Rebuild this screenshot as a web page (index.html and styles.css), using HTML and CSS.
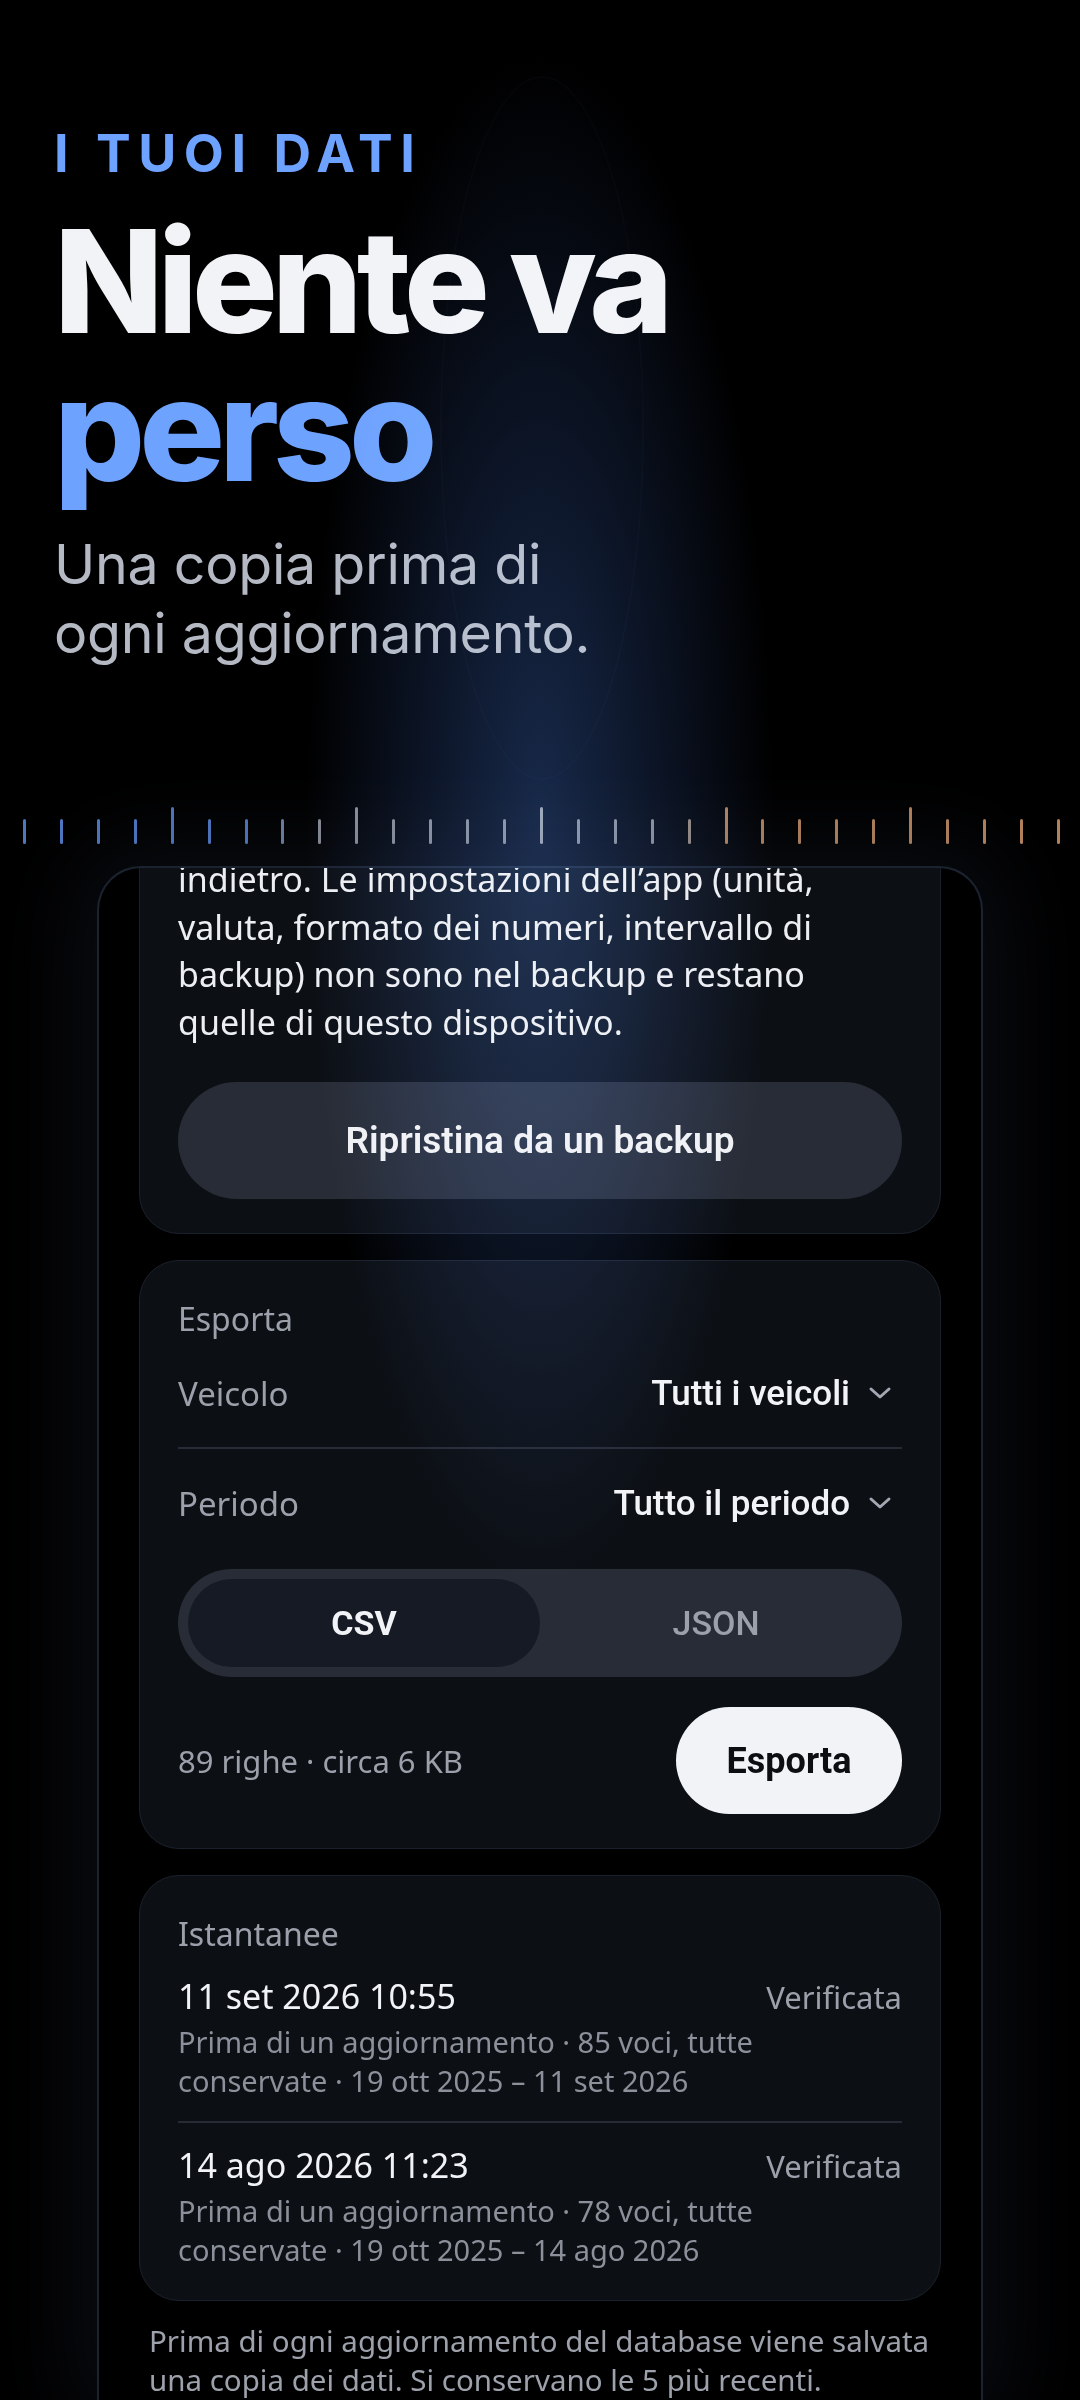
FILE: index.html
```html
<!DOCTYPE html>
<html lang="it">
<head>
    <meta charset="UTF-8">
    <meta name="viewport" content="width=device-width, initial-scale=1.0">
    <title>I tuoi dati</title>
    <link rel="stylesheet" href="styles.css">
</head>
<body>

    <header class="hero">
        <p class="eyebrow">I TUOI DATI</p>
        <h1 class="title">Niente va<br><span class="accent">perso</span></h1>
        <p class="subtitle">Una copia prima di<br>ogni aggiornamento.</p>
    </header>

    <div class="ruler">
        <span class="tick blue"></span>
        <span class="tick blue"></span>
        <span class="tick blue"></span>
        <span class="tick blue"></span>
        <span class="tick blue tall"></span>
        <span class="tick blue"></span>
        <span class="tick blue"></span>
        <span class="tick blue-gray"></span>
        <span class="tick gray"></span>
        <span class="tick gray tall"></span>
        <span class="tick gray"></span>
        <span class="tick gray"></span>
        <span class="tick gray"></span>
        <span class="tick gray"></span>
        <span class="tick light tall"></span>
        <span class="tick gray"></span>
        <span class="tick gray"></span>
        <span class="tick gray"></span>
        <span class="tick gray-orange"></span>
        <span class="tick orange tall"></span>
        <span class="tick orange"></span>
        <span class="tick orange"></span>
        <span class="tick orange"></span>
        <span class="tick orange"></span>
        <span class="tick orange tall"></span>
        <span class="tick orange"></span>
        <span class="tick orange"></span>
        <span class="tick orange"></span>
        <span class="tick orange"></span>
    </div>

    <main class="frame">
        <!-- list is scrolled: the restore card starts above the frame edge -->
        <div class="list">
            <section class="card restore">
                <p class="restore-text">indietro. Le impostazioni dell’app (unità, valuta, formato dei numeri, intervallo di backup) non sono nel backup e restano quelle di questo dispositivo.</p>
                <button class="btn-dark">Ripristina da un backup</button>
            </section>

            <section class="card">
                <p class="card-label">Esporta</p>
                <div class="field">
                    <span class="field-name">Veicolo</span>
                    <span class="field-value">Tutti i veicoli
                        <svg class="chevron" width="24" height="14" viewBox="0 0 24 14"><path d="M3 3 L12 11 L21 3" fill="none" stroke="#a3a8b2" stroke-width="3" stroke-linecap="round" stroke-linejoin="round"/></svg>
                    </span>
                </div>
                <div class="field">
                    <span class="field-name">Periodo</span>
                    <span class="field-value">Tutto il periodo
                        <svg class="chevron" width="24" height="14" viewBox="0 0 24 14"><path d="M3 3 L12 11 L21 3" fill="none" stroke="#a3a8b2" stroke-width="3" stroke-linecap="round" stroke-linejoin="round"/></svg>
                    </span>
                </div>
                <div class="segmented">
                    <span class="seg active">CSV</span>
                    <span class="seg">JSON</span>
                </div>
                <div class="export-row">
                    <span class="export-info">89 righe · circa 6 KB</span>
                    <button class="btn-light">Esporta</button>
                </div>
            </section>

            <section class="card snapshots">
                <p class="card-label">Istantanee</p>
                <div class="snap">
                    <div class="snap-head">
                        <span class="snap-date">11 set 2026 10:55</span>
                        <span class="snap-status">Verificata</span>
                    </div>
                    <p class="snap-meta">Prima di un aggiornamento · 85 voci, tutte conservate · 19 ott 2025 – 11 set 2026</p>
                </div>
                <div class="snap">
                    <div class="snap-head">
                        <span class="snap-date">14 ago 2026 11:23</span>
                        <span class="snap-status">Verificata</span>
                    </div>
                    <p class="snap-meta">Prima di un aggiornamento · 78 voci, tutte conservate · 19 ott 2025 – 14 ago 2026</p>
                </div>
            </section>

            <p class="note">Prima di ogni aggiornamento del database viene salvata una copia dei dati. Si conservano le 5 più recenti.</p>
        </div>
    </main>

    <div class="glow"></div>

</body>
</html>
```

FILE: styles.css
```css
html, body {
    margin: 0;
    background: #000;
}
body {
    position: relative;
    height: 2400px;
    overflow: hidden;
    display: flex;
    flex-direction: column;
    font-family: "Noto Sans", sans-serif;
    color: #eceef2;
}
p {
    margin: 0;
}
button {
    border: none;
    cursor: pointer;
}

/* hero */
.hero {
    padding: 124px 54px 0;
    font-family: Inter, sans-serif;
}
.eyebrow {
    font-size: 52px;
    line-height: 60px;
    font-weight: 700;
    letter-spacing: 0.145em;
    color: #6ea2ff;
}
.title {
    margin: 23px 0 0;
    font-size: 143px;
    line-height: 148px;
    font-weight: 800;
    letter-spacing: -0.042em;
    color: #f2f3f7;
}
.accent {
    color: #6ea2ff;
}
.subtitle {
    margin-top: 26px;
    font-size: 55.5px;
    line-height: 69px;
    letter-spacing: -0.005em;
    color: #b4b9c4;
}

/* ruler */
.ruler {
    display: flex;
    justify-content: space-between;
    align-items: flex-end;
    margin-top: 140px;
    padding: 0 20px 0 23px;
}
.tick {
    width: 3px;
    height: 25px;
    border-radius: 2px;
}
.tick.tall {
    height: 37px;
}
.blue { background: #4f78c2; }
.blue-gray { background: #6f82a6; }
.gray { background: #8a8e97; }
.light { background: #9a9ea6; }
.gray-orange { background: #97897c; }
.orange { background: #b3835c; }

/* frame */
.frame {
    flex: 1;
    margin: 22px 97px 0;
    padding: 0 40px;
    border: 2px solid #1b2230;
    border-bottom: none;
    border-radius: 44px 44px 0 0;
    background: #000;
    overflow: hidden;
    box-shadow: 0 0 90px 24px rgba(46, 56, 76, 0.22);
}
.list {
    display: flex;
    flex-direction: column;
    gap: 26px;
    margin-top: -51px;
}
.card {
    padding: 38px 38px 34px;
    background: #0c0f14;
    border: 1px solid #1b212c;
    border-radius: 40px;
}
.card-label {
    font-size: 32px;
    line-height: 40px;
    color: #9ba0aa;
}

/* restore */
.restore-text {
    font-size: 34px;
    line-height: 47.5px;
    color: #eceef2;
}
.btn-dark {
    display: block;
    width: 100%;
    height: 117px;
    margin-top: 36px;
    border-radius: 60px;
    background: #282c36;
    color: #f0f1f5;
    font-family: Roboto, sans-serif;
    font-size: 37px;
    font-weight: 600;
}

/* export */
.field {
    display: flex;
    justify-content: space-between;
    align-items: center;
    height: 108px;
}
.field + .field {
    border-top: 2px solid #262b35;
}
.field-name {
    font-size: 33px;
    color: #9ba0aa;
}
.field-value {
    display: flex;
    align-items: center;
    font-family: Roboto, sans-serif;
    font-size: 35px;
    font-weight: 500;
    color: #f2f3f7;
}
.chevron {
    margin: 0 10px 0 18px;
}
.segmented {
    display: flex;
    height: 108px;
    margin-top: 12px;
    padding: 10px;
    box-sizing: border-box;
    border-radius: 60px;
    background: #282c36;
}
.seg {
    flex: 1;
    display: flex;
    align-items: center;
    justify-content: center;
    border-radius: 50px;
    font-family: Roboto, sans-serif;
    font-size: 34px;
    font-weight: 500;
    color: #9ba0aa;
}
.seg.active {
    background: #151a24;
    color: #f2f3f7;
    font-weight: 700;
}
.export-row {
    display: flex;
    justify-content: space-between;
    align-items: center;
    margin-top: 30px;
}
.export-info {
    font-size: 31px;
    color: #9ba0aa;
}
.btn-light {
    width: 226px;
    height: 107px;
    border-radius: 60px;
    background: #f2f3f7;
    color: #0c0e12;
    font-family: Roboto, sans-serif;
    font-size: 36px;
    font-weight: 700;
}

/* snapshots */
.snapshots {
    padding-bottom: 31px;
}
.snap {
    padding: 19px 0 21px;
}
.snap + .snap {
    border-top: 2px solid #262b35;
}
.snap:last-child {
    padding-bottom: 0;
}
.snap-head {
    display: flex;
    justify-content: space-between;
    align-items: baseline;
}
.snap-date {
    font-size: 34px;
    line-height: 46px;
    color: #f2f3f7;
}
.snap-status {
    font-size: 31px;
    color: #9ba0aa;
}
.snap-meta {
    margin-top: 4px;
    font-size: 29px;
    line-height: 38.5px;
    color: #8b909a;
}
.note {
    margin-top: -6px;
    padding: 0 0 0 10px;
    margin-right: -12px;
    font-size: 29.5px;
    line-height: 39px;
    color: #9ca1ab;
}

/* light column over the page */
.glow {
    position: absolute;
    inset: 0;
    pointer-events: none;
    mix-blend-mode: screen;
    background:
        radial-gradient(ellipse 300px 980px at 540px 820px, rgba(34, 60, 108, 0.68) 0%, rgba(30, 52, 96, 0.38) 40%, rgba(0, 0, 0, 0) 78%);
}
.glow::before {
    content: "";
    position: absolute;
    left: 440px;
    top: 76px;
    width: 200px;
    height: 700px;
    border: 2px solid rgba(120, 150, 200, 0.03);
    border-radius: 50%;
}
```
